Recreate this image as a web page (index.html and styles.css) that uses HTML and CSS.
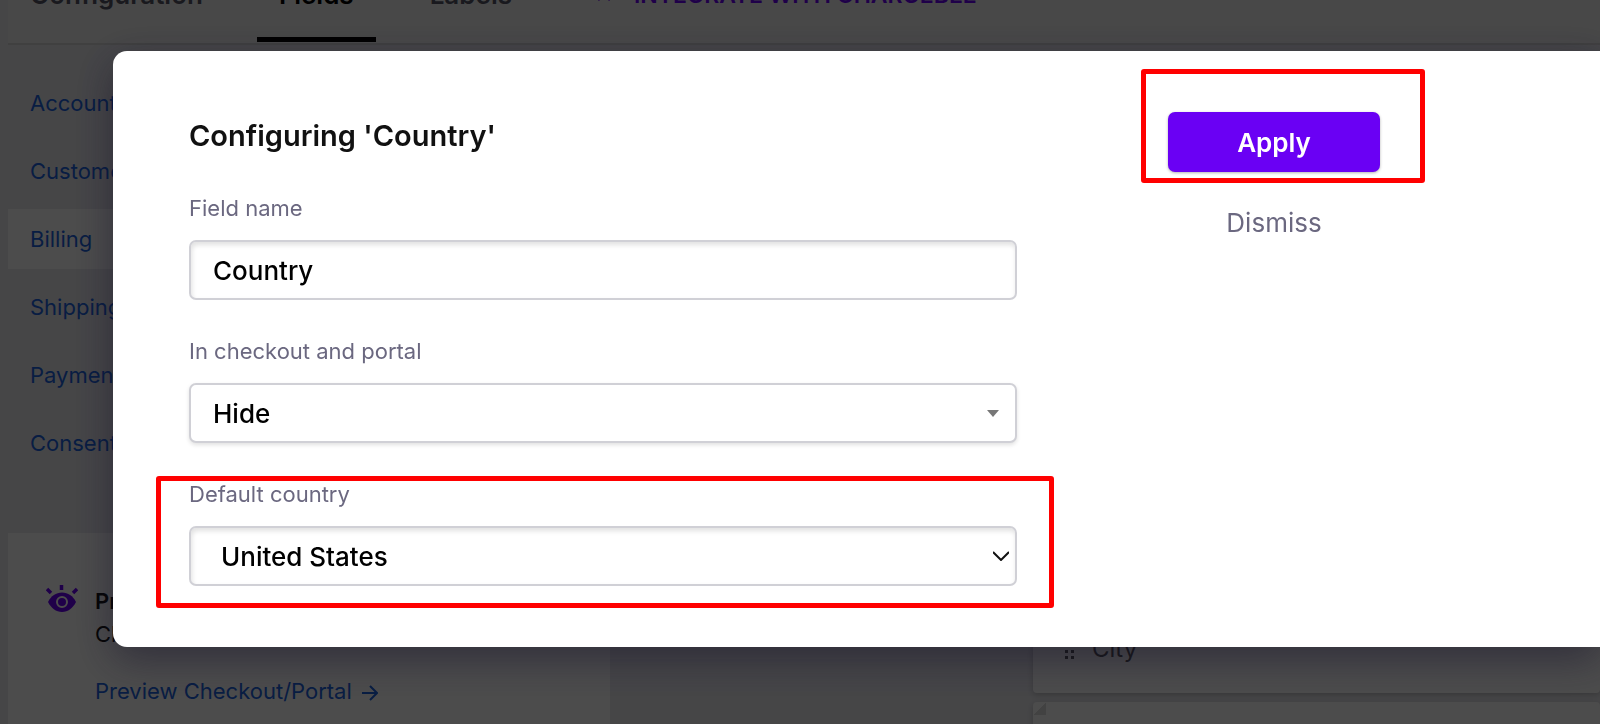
FILE: index.html
```html
<!DOCTYPE html>
<html lang="en">

<head>
  <meta charset="UTF-8">
  <title>Configuring 'Country'</title>
  <link rel="stylesheet" href="styles.css">
</head>

<body>

  <div class="page">
    <nav class="tabs">
      <a href="#" class="tab">Configuration</a>
      <a href="#" class="tab active">Fields</a>
      <a href="#" class="tab">Labels</a>
      <a href="#" class="tab integrate">
        <svg width="20" height="16" viewBox="0 0 20 16"><path d="M7 2 2 8l4 5M13 2l5 6-4 5" fill="none" stroke="currentColor" stroke-width="3"/></svg>
        INTEGRATE WITH CHARGEBEE
      </a>
    </nav>

    <div class="content">
      <aside class="sidebar">
        <ul class="menu">
          <li><a href="#">Account</a></li>
          <li><a href="#">Customer</a></li>
          <li><a href="#" class="selected">Billing</a></li>
          <li><a href="#">Shipping</a></li>
          <li><a href="#">Payment</a></li>
          <li><a href="#">Consent</a></li>
        </ul>

        <div class="preview">
          <svg class="eye" width="32" height="28" viewBox="0 0 32 28">
            <path d="M2 17C5 11 10 7.500 16 7.500S27 11 30 17C27 23 22 27 16 27S5 23 2 17z" fill="currentColor"/>
            <circle cx="16" cy="17" r="5" fill="none" stroke="#fff" stroke-width="2"/>
            <path d="M1 4l4 4M15.500 0v5M31 4l-4 4" stroke="currentColor" stroke-width="3.500"/>
          </svg>
          <div class="preview-text">
            <strong>Preview</strong>
            <p>Checkout</p>
            <a href="#">Preview Checkout/Portal
              <svg class="arrow" width="16" height="16" viewBox="0 0 16 16"><path d="M0 8h14M8 1l7 7-7 7" fill="none" stroke="currentColor" stroke-width="2"/></svg>
            </a>
          </div>
        </div>
      </aside>

      <main class="panel">
        <div class="row">
          <svg width="10" height="22" viewBox="0 0 10 22" fill="currentColor"><path d="M0 0h3v3H0zM6 0h3v3H6zM0 6h3v3H0zM6 6h3v3H6zM0 12h3v3H0zM6 12h3v3H6zM0 18h3v3H0zM6 18h3v3H6z"/></svg>
          <span>City</span>
        </div>
        <div class="row folded"></div>
      </main>
    </div>
  </div>

  <div class="overlay">
    <div class="dialog" role="dialog" aria-labelledby="title">
      <form class="fields">
        <h2 id="title">Configuring 'Country'</h2>

        <div class="field">
          <label for="fieldName">Field name</label>
          <input type="text" id="fieldName" value="Country" class="control inset">
        </div>

        <div class="field">
          <label for="display">In checkout and portal</label>
          <div class="select">
            <select id="display" class="control raised">
              <option>Hide</option>
            </select>
            <svg class="caret" width="12" height="7" viewBox="0 0 12 7"><path d="M0 0h12L6 7z" fill="#777"/></svg>
          </div>
        </div>

        <div class="field">
          <label for="defaultCountry">Default country</label>
          <div class="select">
            <select id="defaultCountry" class="control inset country">
              <option>United States</option>
            </select>
            <svg class="chevron" width="16" height="10" viewBox="0 0 16 10"><path d="M0 1l8 8 8-8" fill="none" stroke="#111" stroke-width="2"/></svg>
          </div>
          <div class="mark mark-field"></div>
        </div>
      </form>

      <div class="actions">
        <div class="apply">
          <button type="button" class="btn primary">Apply</button>
          <div class="mark mark-apply"></div>
        </div>
        <button type="button" class="btn">Dismiss</button>
      </div>
    </div>
  </div>

</body>

</html>
```
FILE: styles.css
```css
* {
  box-sizing: border-box;
}

body {
  margin: 0;
  font-family: Inter, "Liberation Sans", sans-serif;
  font-size: 22px;
  line-height: 28px;
  color: #111;
  background-color: #eaeaef;
}

a {
  color: #1c63e0;
  text-decoration: none;
}

h2,
p,
ul {
  margin: 0;
  padding: 0;
}

/* page behind the dialog */
.page {
  height: 100vh;
  padding-left: 8px;
  overflow: hidden;
}

.tabs {
  display: flex;
  height: 92px;
  margin-top: -47px;
  padding-bottom: 1px;
  background-color: #f2f2f2;
  border-bottom: 2px solid #d8d8d8;
}

.tab {
  display: flex;
  align-items: center;
  gap: 20px;
  padding: 0 22px;
  margin-right: 32px;
  font-size: 26px;
  font-weight: 600;
  color: #555566;
  border-bottom: 5px solid transparent;
}

.tab.active {
  color: #000;
  border-color: #000;
}

.tab.integrate {
  color: #6a00f4;
  font-size: 23px;
  margin-left: 6px;
}

.content {
  display: flex;
  justify-content: space-between;
}

.sidebar {
  width: 602px;
  padding-top: 28px;
}

.menu {
  display: grid;
  gap: 8px;
  list-style: none;
}

.menu a {
  display: block;
  padding: 16px 22px;
}

.menu a.selected {
  background-color: #fff;
}

.preview {
  display: flex;
  gap: 17px;
  height: 300px;
  margin-top: 60px;
  padding: 52px 38px;
  background-color: #fff;
}

.eye {
  color: #6a00f4;
}

.preview-text strong {
  display: block;
  font-weight: 600;
  line-height: 32px;
}

.preview-text p {
  margin-bottom: 26px;
  line-height: 34px;
}

.arrow {
  margin-left: 4px;
  vertical-align: -2px;
}

.panel {
  flex: 1;
  margin-left: 400px;
  padding: 560px 0 0 23px;
}

.row {
  display: flex;
  align-items: center;
  gap: 17px;
  height: 88px;
  padding: 0 32px;
  font-size: 24px;
  color: #555;
  background-color: #fff;
  border-radius: 4px;
  box-shadow: 0 2px 6px rgba(0, 0, 0, 0.2);
}

.row.folded {
  margin-top: 9px;
  background-image: linear-gradient(135deg, #fff 50%, #ddd 50%);
  background-repeat: no-repeat;
  background-size: 13px 13px;
}

/* dialog */
.overlay {
  position: fixed;
  inset: 0;
  padding: 51px 0 0 113px;
  background-color: rgba(0, 0, 0, 0.7);
}

.dialog {
  display: flex;
  gap: 151px;
  padding: 61px 220px 61px 76px;
  background-color: #fff;
  border-radius: 14px 0 0 14px;
  box-shadow: 0 12px 40px rgba(20, 15, 40, 0.5);
}

.fields {
  flex: 1;
}

.fields h2 {
  padding: 6px 0;
  margin-bottom: 34px;
  font-size: 29px;
  font-weight: 600;
  line-height: 36px;
}

.field {
  position: relative;
  display: grid;
  gap: 18px;
}

.field + .field {
  margin-top: 37px;
}

.field label {
  color: #6b6880;
}

.select {
  position: relative;
  display: grid;
}

.control {
  width: 100%;
  height: 60px;
  padding: 0 22px;
  font: 500 26px Inter, "Liberation Sans", sans-serif;
  color: #000;
  background-color: #fff;
  border: 2px solid #d0d0d6;
  border-radius: 7px;
  appearance: none;
}

.control.country {
  padding-left: 30px;
}

.inset {
  box-shadow: inset 1px 3px 5px rgba(0, 0, 0, 0.12);
}

.raised {
  box-shadow: 0 2px 4px rgba(0, 0, 0, 0.12);
}

.caret,
.chevron {
  position: absolute;
  top: 27px;
  right: 18px;
  pointer-events: none;
}

.chevron {
  top: 25px;
  right: 8px;
}

.actions {
  width: 212px;
}

.apply {
  position: relative;
}

.btn {
  width: 100%;
  height: 60px;
  margin-bottom: 20px;
  font: 400 26px Inter, "Liberation Sans", sans-serif;
  color: #6b6880;
  background: none;
  border: 0;
  border-radius: 7px;
}

.btn.primary {
  font-weight: 600;
  color: #fff;
  background-color: #6a00f4;
  box-shadow: 0 1px 3px rgba(0, 0, 0, 0.3);
}

.mark {
  position: absolute;
  border: 5px solid #f00;
  border-radius: 3px;
  pointer-events: none;
}

.mark-field {
  inset: -4px -37px -22px -33px;
}

.mark-apply {
  inset: -43px -45px 9px -27px;
}
```
